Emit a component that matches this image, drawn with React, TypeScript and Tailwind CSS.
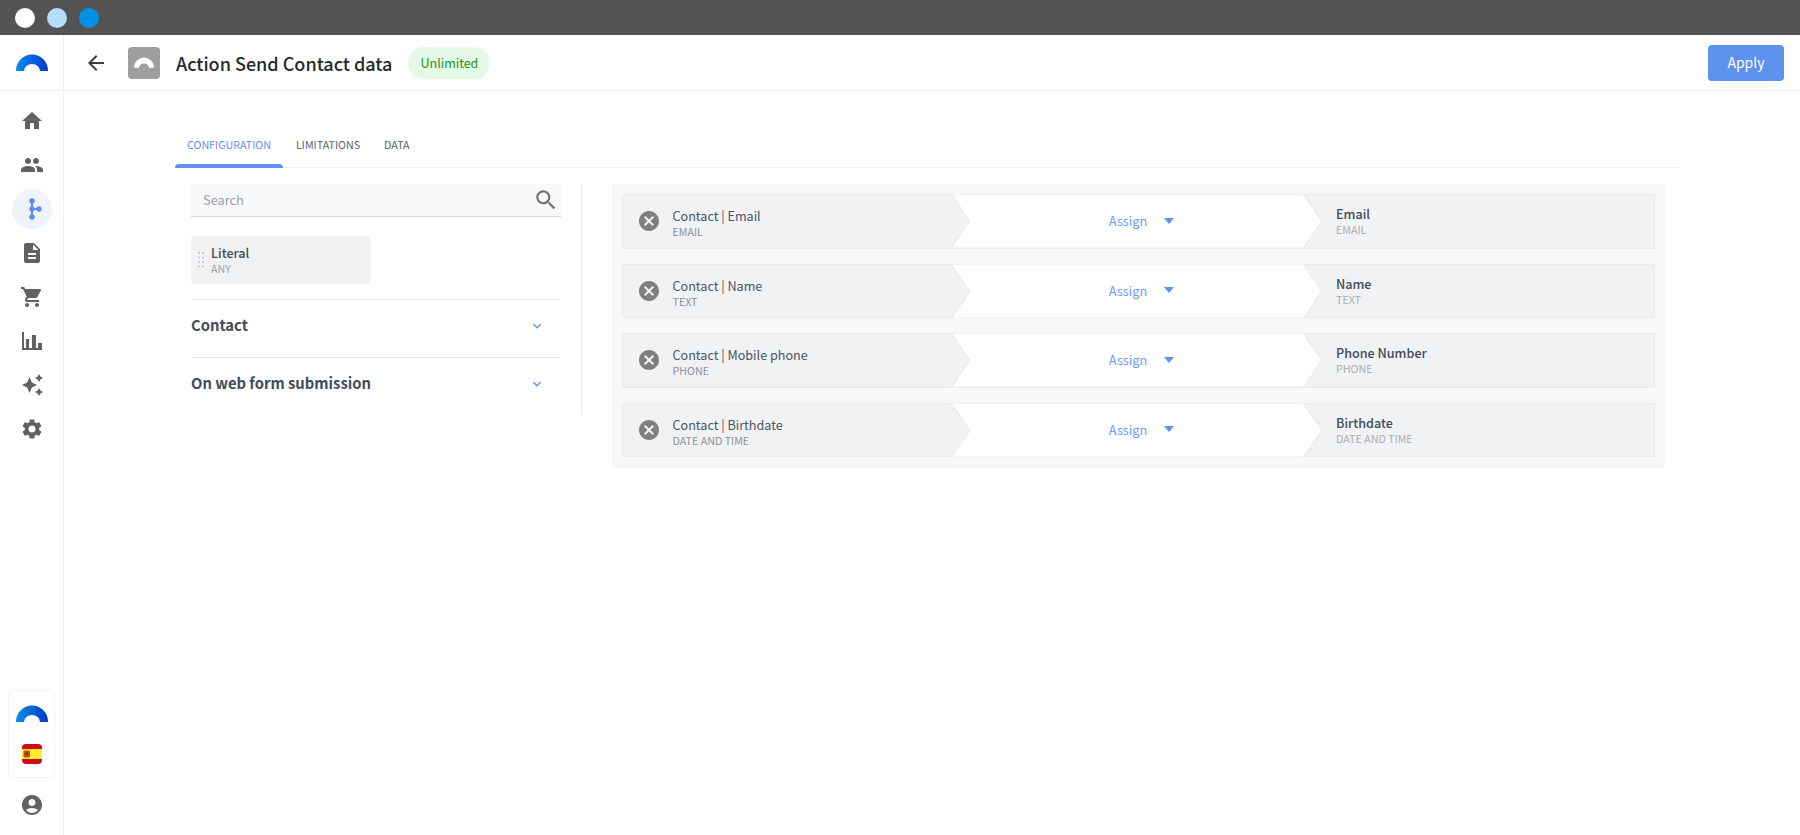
import { MdHome, MdPeople, MdDescription, MdShoppingCart, MdSettings, MdAccountCircle, MdArrowBack, MdSearch, MdKeyboardArrowDown, MdCancel } from "react-icons/md";

function Arc({ w, h, id, white }: { w: number; h: number; id: string; white?: boolean }) {
  return (
    <svg width={w} height={h} viewBox="0 0 32 17">
      <defs>
        <linearGradient id={id} x1="0" y1="0" x2="1" y2="0">
          <stop offset="0" stopColor="#0a8fe8" />
          <stop offset="1" stopColor="#0038cc" />
        </linearGradient>
      </defs>
      <path d="M0 17 A16 16.5 0 0 1 32 17 L24 17 A8 7 0 0 0 8 17 Z" fill={white ? "#ffffff" : `url(#${id})`} />
    </svg>
  );
}

function NavItem({ children, active }: { children: React.ReactNode; active?: boolean }) {
  return (
    <div className="h-[44px] flex items-center justify-center">
      <div className={active ? "w-10 h-10 rounded-full bg-[#eef3fc] flex items-center justify-center" : "flex items-center justify-center"}>{children}</div>
    </div>
  );
}

const rows = [
  { l: "Contact | Email", lt: "EMAIL", r: "Email", rt: "EMAIL" },
  { l: "Contact | Name", lt: "TEXT", r: "Name", rt: "TEXT" },
  { l: "Contact | Mobile phone", lt: "PHONE", r: "Phone Number", rt: "PHONE" },
  { l: "Contact | Birthdate", lt: "DATE AND TIME", r: "Birthdate", rt: "DATE AND TIME" },
];

function Row({ l, lt, r, rt }: { l: string; lt: string; r: string; rt: string }) {
  return (
    <div className="relative h-[54.5px] flex bg-[#f1f2f4] rounded-[2px] border border-[#e9eaec]">
      <div className="w-[328px] flex items-center pl-[13.5px] shrink-0">
        <MdCancel size={24} className="text-[#7f7f7f] shrink-0" />
        <div className="ml-[12px] flex flex-col pt-[4px]">
          <span className="text-[12.6px] leading-[17px] text-[#4b5461]">{l}</span>
          <span className="text-[10.7px] leading-[15px] text-[#8d9197]">{lt}</span>
        </div>
      </div>
      <div className="w-[371px] shrink-0 flex items-center justify-center relative">
        <svg className="absolute left-0 top-[-1px] h-[54.5px] w-[371px]" viewBox="0 0 371 54" preserveAspectRatio="none">
          <path d="M0 0 H352 L371 27 L352 54 H0 L19 27 Z" fill="#ffffff" />
          <path d="M0 0 L19 27 L0 54 M352 0 L371 27 L352 54" fill="none" stroke="#e9eaec" />
          <path d="M0 0.5 H352" fill="none" stroke="#f0f1f2" />
          <path d="M0 53.5 H352" fill="none" stroke="#e6e7e9" />
        </svg>
        <div className="relative flex items-center pl-[10px] pb-[1px]">
          <span className="text-[12.7px] text-[#6a9bf5]">Assign</span>
          <svg className="ml-[17px]" width="10" height="6" viewBox="0 0 10 6"><path d="M0 0 H10 L5 6 Z" fill="#5f92ee" /></svg>
        </div>
      </div>
      <div className="flex-1 flex flex-col justify-center pl-[14px]">
        <span className="text-[12.6px] leading-[17px] font-medium text-[#434b57]">{r}</span>
        <span className="text-[10.7px] leading-[15px] text-[#a9acb1]">{rt}</span>
      </div>
    </div>
  );
}

function Section({ title }: { title: string }) {
  return (
    <div className="h-[58px] border-t border-[#e9eaec] flex items-center justify-between pr-[16px] pb-[7px]">
      <span className="text-[14.8px] font-bold text-[#434b57]">{title}</span>
      <MdKeyboardArrowDown size={16} className="text-[#5f92ee] mt-[2px]" />
    </div>
  );
}

export default function App() {
  return (
    <div className="w-[1800px] h-[835px] bg-white flex flex-col overflow-hidden font-['Noto_Sans_CJK_SC','Lato',sans-serif]">
      <div className="h-[35px] bg-[#535353] flex items-center pl-[15px] gap-[12px] shrink-0">
        <div className="w-5 h-5 rounded-full bg-white" />
        <div className="w-5 h-5 rounded-full bg-[#b3ddf8]" />
        <div className="w-5 h-5 rounded-full bg-[#0091e6]" />
      </div>
      <div className="h-[56px] flex items-center border-b border-[#f0f0f0] shrink-0">
        <div className="w-[64px] h-full border-r border-[#f0f0f0] flex items-center justify-center pl-[1px]"><Arc w={32} h={17} id="a1" /></div>
        <MdArrowBack size={24} className="ml-[20px] text-[#3d3d3d]" />
        <div className="ml-[20px] w-8 h-8 rounded-[4px] bg-[#9e9e9e] flex items-center justify-center"><Arc w={20} h={11} id="a2" white /></div>
        <span className="ml-[16px] text-[18px] leading-[28px] font-medium text-[#24292e]">Action Send Contact data</span>
        <span className="ml-[16px] h-8 w-[82px] rounded-full bg-[#e6f9e6] text-[#1a961a] text-[12.5px] flex items-center justify-center pt-[1px]">Unlimited</span>
        <button className="ml-auto mr-[16px] w-[76px] h-[36px] rounded-[4px] bg-[#5f92ee] text-white text-[14px]">Apply</button>
      </div>
      <div className="flex-1 flex min-h-0">
        <div className="w-[64px] border-r border-[#f0f0f0] flex flex-col pt-[8px] shrink-0 text-[#616161]">
          <NavItem><MdHome size={24} /></NavItem>
          <NavItem><MdPeople size={24} /></NavItem>
          <NavItem active>
            <svg width="20" height="24" viewBox="0 0 20 24" fill="#5b8ff0">
              <path d="M9 4 H11 V20 H9 Z M10 11 H17 V13 H10 Z" />
              <circle cx="10" cy="4" r="2.7" /><circle cx="10" cy="12" r="2.7" /><circle cx="10" cy="20" r="2.7" /><circle cx="17" cy="12" r="2.7" />
            </svg>
          </NavItem>
          <NavItem><MdDescription size={24} /></NavItem>
          <NavItem><MdShoppingCart size={24} /></NavItem>
          <NavItem>
            <svg width="20" height="18" viewBox="0 0 20 18" fill="#616161">
              <path d="M0 0 H2 V16 H20 V18 H0 Z M4 7 H7 V16 H4 Z M10 3 H14 V16 H10 Z M16 11 H20 V16 H16 Z" />
            </svg>
          </NavItem>
          <NavItem>
            <svg width="22" height="22" viewBox="0 0 22 22" fill="#616161">
              <path d="M8.5 3 L10.9 8.6 L16 11 L10.9 13.4 L8.5 19 L6.1 13.4 L1 11 L6.1 8.6 Z" />
              <path d="M18 0 L19.4 2.6 L22 4 L19.4 5.4 L18 8 L16.6 5.4 L14 4 L16.6 2.6 Z" />
              <path d="M18 14 L19.4 16.6 L22 18 L19.4 19.4 L18 22 L16.6 19.4 L14 18 L16.6 16.6 Z" />
            </svg>
          </NavItem>
          <NavItem><MdSettings size={24} /></NavItem>
          <div className="mt-auto mx-[8px] h-[88px] border border-[#f3f3f3] rounded-[4px] flex flex-col items-center pt-[14px]">
            <Arc w={32} h={17} id="a3" />
            <svg className="mt-[22px] rounded-[4px]" width="20" height="20" viewBox="0 0 20 20">
              <rect width="20" height="20" fill="#cc0d14" />
              <rect y="5" width="20" height="10" fill="#ffee2e" />
              <rect x="1.5" y="6.5" width="6.5" height="7" rx="1" fill="#b5561e" />
              <rect x="3.5" y="8.5" width="2.5" height="2.5" fill="#cc0d14" />
            </svg>
          </div>
          <div className="h-[57px] flex items-center justify-center pb-[3px]"><MdAccountCircle size={24} /></div>
        </div>
        <div className="flex-1 min-w-0 pl-[111px] pr-[120px] pt-[35px]">
          <div className="h-[42px] border-b border-[#eeeeee] flex items-stretch text-[10.7px] uppercase">
            <div className="w-[108px] relative flex items-center justify-center pb-[3px] text-[#5f92ee]">
              Configuration
              <div className="absolute left-0 right-0 bottom-[-1px] h-[4px] bg-[#5f92ee] rounded-t-[4px]" />
            </div>
            <div className="ml-[13px] flex items-center pb-[3px] text-[#59626e]">Limitations</div>
            <div className="ml-[24px] flex items-center pb-[3px] text-[#59626e]">Data</div>
          </div>
          <div className="mt-[16px] flex items-start">
            <div className="w-[407px] pl-[16px] pr-[20px] border-r border-[#e8e9eb] h-[231px] shrink-0">
              <div className="h-[33px] bg-[#f8f9fb] border-b border-[#d5d8dc] flex items-center justify-between pl-[12px] pr-[2px]">
                <span className="text-[12.8px] text-[#9a9fa5]">Search</span>
                <MdSearch size={26} className="text-[#737373]" />
              </div>
              <div className="mt-[19px] w-[180px] h-[48px] bg-[#f1f2f4] rounded-[3px] flex items-center pl-[7px]">
                <svg width="6" height="16" viewBox="0 0 6 16" fill="#c9cbce">
                  <rect x="0" y="0" width="2" height="2" /><rect x="4" y="0" width="2" height="2" />
                  <rect x="0" y="4.5" width="2" height="2" /><rect x="4" y="4.5" width="2" height="2" />
                  <rect x="0" y="9" width="2" height="2" /><rect x="4" y="9" width="2" height="2" />
                  <rect x="0" y="13.5" width="2" height="2" /><rect x="4" y="13.5" width="2" height="2" />
                </svg>
                <div className="ml-[7px] flex flex-col">
                  <span className="text-[12.6px] leading-[17px] font-medium text-[#434b57]">Literal</span>
                  <span className="text-[10.7px] leading-[15px] text-[#a0a4a8]">ANY</span>
                </div>
              </div>
              <div className="mt-[15px]">
                <Section title="Contact" />
                <Section title="On web form submission" />
              </div>
            </div>
            <div className="ml-[30px] w-[1053px] bg-[#f7f8fa] pt-[10px] pb-[11px] px-[10px] flex flex-col gap-[15px]">
              {rows.map((r) => <Row key={r.l} {...r} />)}
            </div>
          </div>
        </div>
      </div>
    </div>
  );
}
